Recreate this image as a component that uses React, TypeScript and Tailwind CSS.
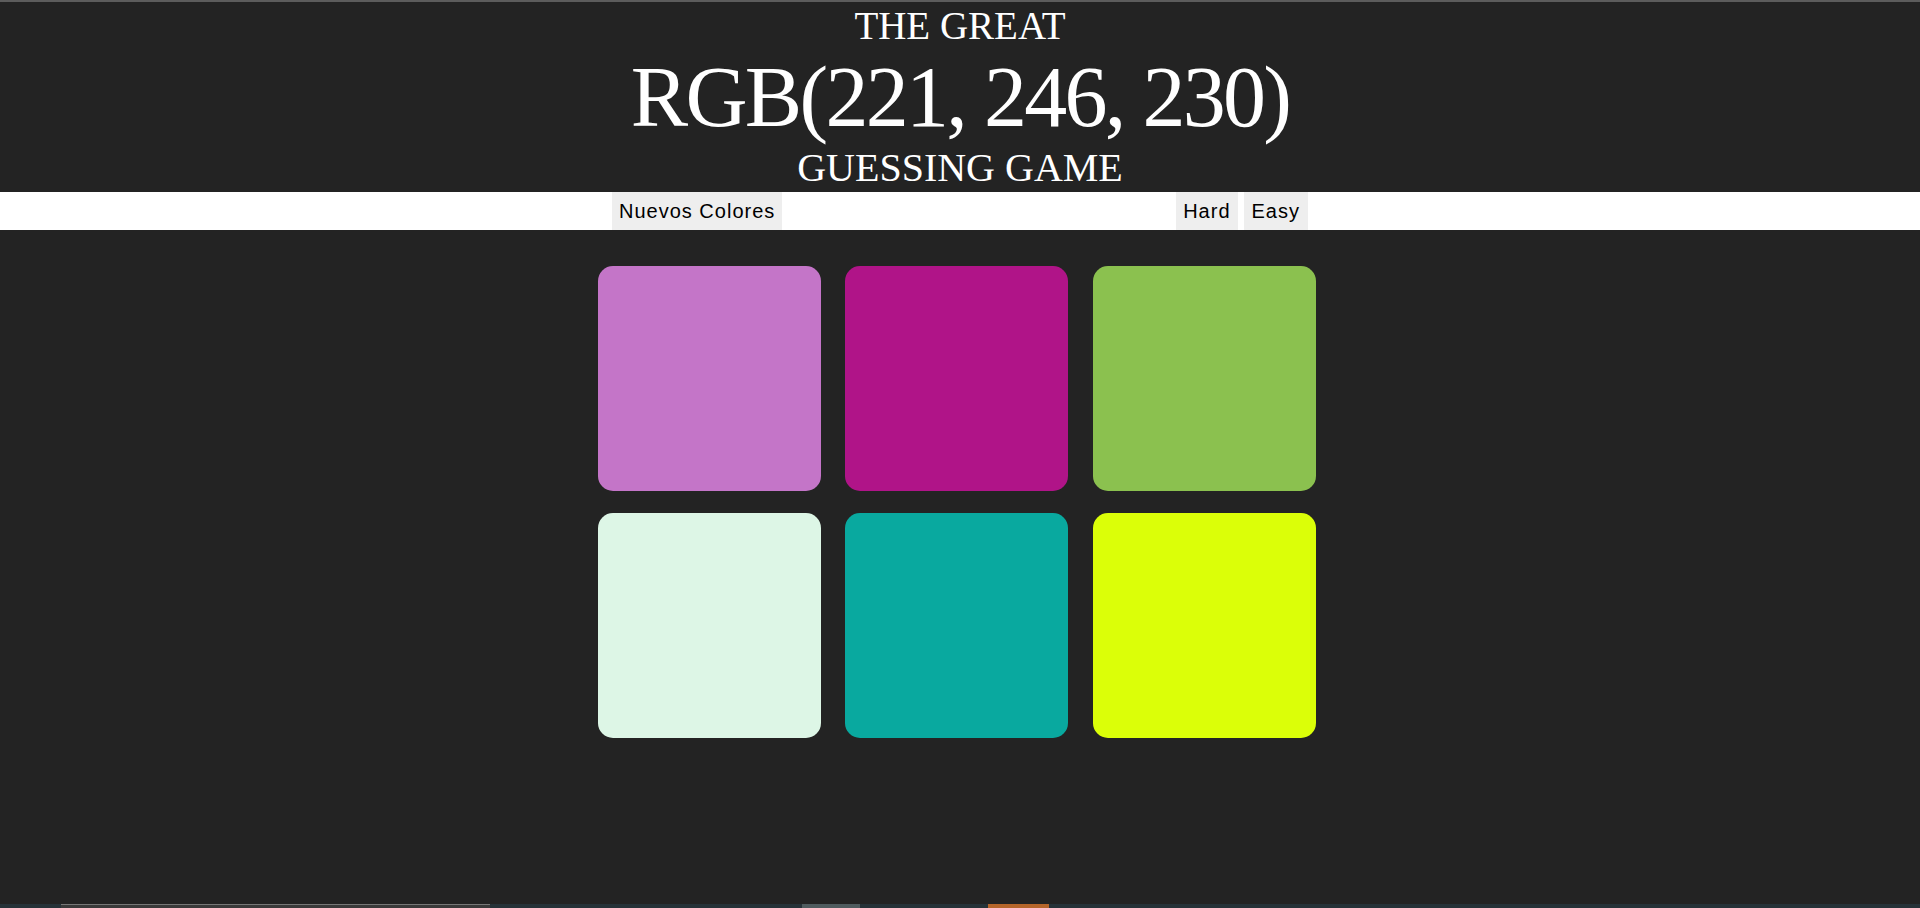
const colors = ['#c475c8', '#b01488', '#8bc14f', '#ddf6e6', '#09a99f', '#dbff08'];

export default function App() {
  return (
    <div className="min-h-screen flex flex-col bg-[#232323] font-['Liberation_Serif',serif]">
      <div className="h-[2px] bg-[#5c5c5c]" />

      {/* titulo */}
      <header className="text-white text-center pt-[5px] pb-[5px]">
        <p className="text-[39px] leading-[38px]">THE GREAT</p>
        <p className="text-[86px] leading-[82px] tracking-[-2.7px] mt-[11px]">RGB(221, 246, 230)</p>
        <p className="text-[40px] leading-[39px] mt-[10px]">GUESSING GAME</p>
      </header>

      {/* barra de botones */}
      <div className="bg-white h-[38px]">
        <div className="w-[696px] mx-auto h-full flex justify-between font-['Liberation_Sans',Arial,sans-serif] text-[20px] tracking-[1px] text-black">
          <button className="bg-[#eeeeee] px-[7px] h-full">Nuevos Colores</button>
          <div className="flex gap-[6px] h-full">
            <button className="bg-[#eeeeee] px-[7px] h-full">Hard</button>
            <button className="bg-[#eeeeee] px-[8px] h-full">Easy</button>
          </div>
        </div>
      </div>

      {/* cuadros */}
      <div className="flex-1 pt-[36px]">
        <div className="w-[727px] mx-auto pl-[1px] pr-[8px]">
          <div className="grid grid-cols-[repeat(3,223px)] gap-x-[24.5px] gap-y-[22px]">
            {colors.map((c) => (
              <div key={c} className="h-[225px] rounded-[15px]" style={{ backgroundColor: c }} />
            ))}
          </div>
        </div>
      </div>

      {/* barra inferior */}
      <div className="h-[4px] bg-[#263238] flex">
        <div className="w-[61px]" />
        <div className="w-[429px] bg-[#3a3a3a] border-t border-[#777]" />
        <div className="w-[312px]" />
        <div className="w-[58px] bg-[#4f5b5e]" />
        <div className="w-[128px]" />
        <div className="w-[61px] bg-[#b5652a]" />
      </div>
    </div>
  );
}
